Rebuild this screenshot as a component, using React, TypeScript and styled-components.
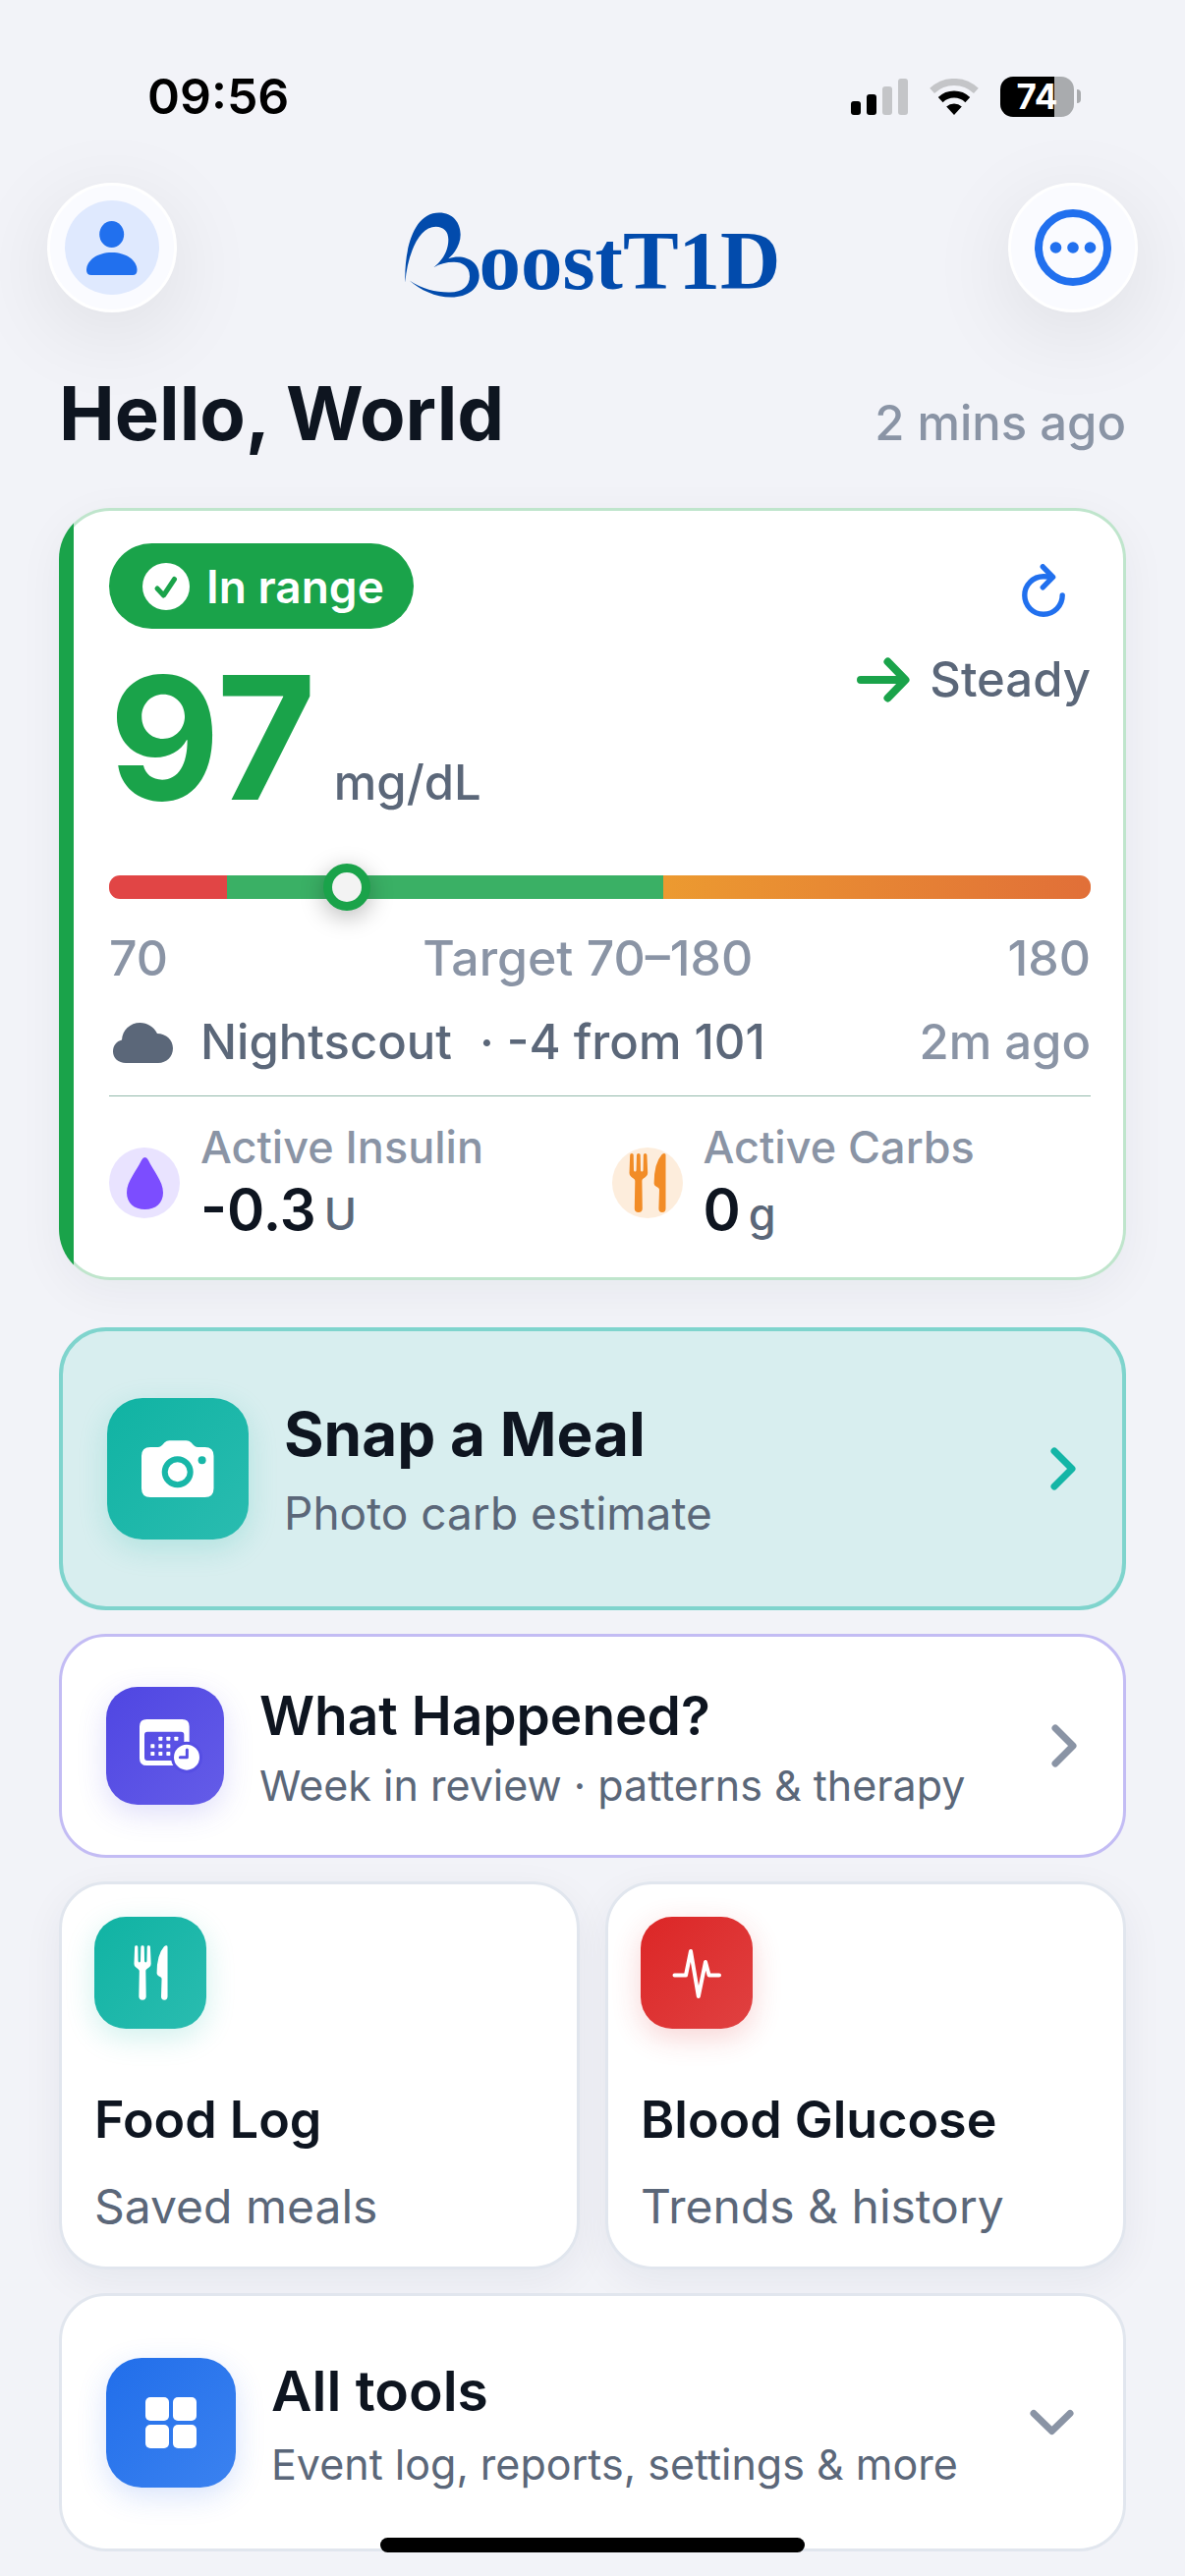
import React from "react";
import styled, { createGlobalStyle } from "styled-components";

const GlobalStyle = createGlobalStyle`
  *, *::before, *::after { box-sizing: border-box; }
  body {
    margin: 0;
    background: #f2f3f8;
    color: #0e1520;
    font-family: Inter, "Noto Sans", sans-serif;
    -webkit-font-smoothing: antialiased;
  }
  button { font: inherit; color: inherit; border: 0; padding: 0; background: none; text-align: left; cursor: pointer; }
  svg { display: block; flex: none; }
`;

const Screen = styled.div`
  padding-bottom: 24px;
`;

const StatusBar = styled.div`
  display: flex;
  align-items: center;
  justify-content: space-between;
  height: 98px;
  margin-top: 49px;
  padding: 0 106px 0 150px;
`;

const Clock = styled.time`
  font-size: 50px;
  font-weight: 600;
  line-height: 60px;
  color: #000;
`;

const StatusIcons = styled.div`
  display: flex;
  align-items: center;
  gap: 22px;
`;

const Battery = styled.div`
  display: flex;
  align-items: center;
  gap: 3px;
`;

const BatteryBody = styled.div`
  display: flex;
  align-items: center;
  justify-content: center;
  width: 75px;
  height: 41px;
  border-radius: 13px;
  background: linear-gradient(to right, #000 74%, #a9abae 74%);
  color: #fff;
  font-size: 35px;
  font-weight: 700;
  line-height: 41px;
`;

const BatteryTip = styled.div`
  width: 4px;
  height: 14px;
  border-radius: 0 4px 4px 0;
  background: #a9abae;
`;

const Header = styled.header`
  display: flex;
  align-items: center;
  justify-content: space-between;
  margin-top: 39px;
  padding: 0 48px;
`;

const RoundButton = styled.button`
  display: grid;
  place-items: center;
  width: 132px;
  height: 132px;
  border: 3px solid #fff;
  border-radius: 50%;
  background: #fafbff;
  box-shadow: 0 20px 90px rgba(0, 0, 0, 0.09);
`;

const Logo = styled.div`
  display: flex;
  align-items: flex-end;
  padding-top: 15px;
  color: #024bac;
  font-family: "Liberation Serif", serif;
  font-size: 85px;
  font-weight: 700;
  line-height: 76px;
`;

const Main = styled.main`
  display: flex;
  flex-direction: column;
  gap: 24px;
  padding: 0 60px;
`;

const Greeting = styled.div`
  display: flex;
  align-items: baseline;
  justify-content: space-between;
  margin: 48px 60px 43px;
`;

const Title = styled.h1`
  margin: 0;
  font-size: 76px;
  font-weight: 700;
  line-height: 108px;
`;

const Meta = styled.span<{ $tone?: "soft" | "strong" }>`
  font-size: 49px;
  font-weight: 500;
  line-height: 60px;
  color: ${(p) => (p.$tone === "strong" ? "#5b6779" : "#8a94a5")};
`;

const RangeLabel = styled(Meta)`
  font-size: 50px;
`;

const GlucoseCard = styled.section`
  display: flex;
  flex-direction: column;
  margin-bottom: 24px;
  padding: 33px 33px 33px 48px;
  border: 3px solid transparent;
  border-radius: 52px;
  background:
    linear-gradient(to right, #1aa34a 12px, #fff 12px) padding-box,
    linear-gradient(to right, #1aa34a 15px, #bfe5cc 15px) border-box;
  box-shadow: 0 12px 48px rgba(20, 30, 60, 0.05);
`;

const Row = styled.div<{ $gapTop?: number; $align?: string }>`
  display: flex;
  align-items: ${(p) => p.$align ?? "center"};
  justify-content: space-between;
  margin-top: ${(p) => p.$gapTop ?? 0}px;
`;

const StatusPill = styled.div`
  display: flex;
  align-items: center;
  gap: 17px;
  height: 87px;
  padding: 0 30px 0 34px;
  border-radius: 44px;
  background: #1aa34a;
  color: #fff;
  font-size: 46px;
  font-weight: 600;
`;

const RefreshButton = styled.button`
  display: grid;
  place-items: center;
  width: 96px;
  height: 87px;
  padding-top: 8px;
`;

const Reading = styled.div`
  display: flex;
  align-items: baseline;
  gap: 18px;
`;

const ReadingValue = styled.span`
  font-size: 174px;
  font-weight: 700;
  line-height: 178px;
  color: #1aa34a;
`;

const Trend = styled.div`
  display: flex;
  align-items: center;
  gap: 20px;
`;

const Range = styled.div`
  position: relative;
  height: 24px;
  margin-top: 51px;
  border-radius: 11px;
  background: linear-gradient(
    to right,
    #e14545 12%,
    #3ab065 12%,
    #3ab065 56.5%,
    #ec9a30 56.5%,
    #e16f38 100%
  );
`;

const RangeKnob = styled.span`
  position: absolute;
  top: 50%;
  width: 48px;
  height: 48px;
  border: 9px solid #1aa34a;
  border-radius: 50%;
  background: #f3f3f3;
  box-shadow: 0 6px 24px rgba(0, 0, 0, 0.28);
  transform: translate(-50%, -50%);
`;

const Source = styled.div`
  display: flex;
  align-items: center;
  gap: 28px;
  padding-left: 4px;
`;

const Divider = styled.hr`
  width: 100%;
  height: 1px;
  margin: 24px 0 0;
  border: 0;
  background: #93b9ac;
`;

const Stats = styled.div`
  display: grid;
  grid-template-columns: 1fr 1fr;
  gap: 24px;
  margin-top: 25px;
`;

const Stat = styled.div`
  display: flex;
  align-items: center;
  gap: 21px;
`;

const StatIcon = styled.div<{ $bg: string }>`
  display: grid;
  place-items: center;
  width: 72px;
  height: 72px;
  border-radius: 50%;
  background: ${(p) => p.$bg};
`;

const StatLabel = styled.div`
  font-size: 45px;
  font-weight: 500;
  line-height: 54px;
  color: #8a94a5;
`;

const StatValue = styled.div`
  display: flex;
  align-items: baseline;
  gap: 8px;
  font-size: 58px;
  font-weight: 600;
  line-height: 72px;
`;

const StatUnit = styled.span`
  font-size: 45px;
  font-weight: 500;
  line-height: 54px;
  color: #5b6779;
`;

const ActionCard = styled.button<{ $height: number; $border: string; $bg?: string; $stroke?: number }>`
  display: flex;
  align-items: center;
  gap: 36px;
  width: 100%;
  min-height: ${(p) => p.$height}px;
  padding: 0 45px;
  border: ${(p) => p.$stroke ?? 3}px solid ${(p) => p.$border};
  border-radius: 48px;
  background: ${(p) => p.$bg ?? "#fff"};
`;

const Tile = styled.span<{ $size: number; $from: string; $to: string; $glow: string }>`
  display: grid;
  flex: none;
  place-items: center;
  width: ${(p) => p.$size}px;
  height: ${(p) => p.$size}px;
  border-radius: ${(p) => (p.$size > 130 ? 36 : 32)}px;
  background: linear-gradient(135deg, ${(p) => p.$from}, ${(p) => p.$to});
  box-shadow: 0 9px 30px ${(p) => p.$glow};
`;

const Copy = styled.span`
  display: flex;
  flex: 1;
  flex-direction: column;
`;

const CardTitle = styled.span<{ $size: number; $weight?: number; $line: number }>`
  font-size: ${(p) => p.$size}px;
  font-weight: ${(p) => p.$weight ?? 600};
  line-height: ${(p) => p.$line}px;
`;

const CardText = styled.span<{ $size: number; $line: number }>`
  font-size: ${(p) => p.$size}px;
  line-height: ${(p) => p.$line}px;
  color: #5b6779;
`;

const Grid = styled.div`
  display: grid;
  grid-template-columns: 1fr 1fr;
  gap: 26px;
`;

const ToolCard = styled.button`
  display: flex;
  flex-direction: column;
  align-items: flex-start;
  padding: 33px 33px 28px;
  border: 3px solid #e1e6ee;
  border-radius: 48px;
  background: #fff;
  box-shadow: 0 12px 42px rgba(20, 30, 60, 0.06);
`;

const ToolCopy = styled.span`
  display: flex;
  flex-direction: column;
  gap: 22px;
  padding-top: 60px;
`;

const HomeIndicator = styled.div`
  position: fixed;
  bottom: 24px;
  left: 50%;
  width: 432px;
  height: 15px;
  border-radius: 8px;
  background: #000;
  transform: translateX(-50%);
`;

const SignalIcon = () => (
  <svg width="58" height="37" viewBox="0 0 58 37" aria-hidden="true">
    <rect x="0" y="23" width="10" height="14" rx="3" />
    <rect x="16" y="16" width="10" height="21" rx="3" />
    <rect x="32" y="8" width="10" height="29" rx="3" fill="#c4c5c8" />
    <rect x="48" y="0" width="10" height="37" rx="3" fill="#c4c5c8" />
  </svg>
);

const WifiIcon = () => (
  <svg width="50" height="37" viewBox="0 0 50 37" fill="none" aria-hidden="true">
    <path d="M2.6 12.4A32.5 32.5 0 0 1 47.4 12.4" stroke="#c4c5c8" strokeWidth="7" />
    <path d="M11.2 21.6A20 20 0 0 1 38.8 21.6" stroke="#000" strokeWidth="7" />
    <path d="M17.2 28.4A12 12 0 0 1 32.8 28.4L25 37Z" fill="#000" />
  </svg>
);

const PersonIcon = () => (
  <svg width="96" height="96" viewBox="0 0 96 96" aria-hidden="true">
    <circle cx="48" cy="48" r="48" fill="#dfe9fe" />
    <g fill="#2170ee">
      <ellipse cx="47.7" cy="34.5" rx="12.5" ry="13.5" />
      <path d="M22 71C22 61 33 53 47.7 53C62.5 53 73.5 61 73.5 71Q73.5 76 69 76H27Q22 76 22 71Z" />
    </g>
  </svg>
);

const MoreIcon = () => (
  <svg width="78" height="78" viewBox="0 0 78 78" fill="#2170ee" aria-hidden="true">
    <circle cx="39" cy="39" r="35" fill="none" stroke="#2170ee" strokeWidth="8" />
    <circle cx="21.5" cy="39" r="5.8" />
    <circle cx="39" cy="39" r="5.8" />
    <circle cx="56.5" cy="39" r="5.8" />
  </svg>
);

const HeartMark = () => (
  <svg width="76" height="87" viewBox="30 47 228 260" fill="#024bac" aria-hidden="true">
    <path d="M31 261C28 170 52 48 135 48C176 48 200 78 200 115C200 144 184 170 163 188C214 172 257 198 257 240C257 280 222 306 172 306C122 306 78 284 44 255C84 282 128 292 168 291C206 290 228 272 228 242C228 212 206 199 180 199C156 199 136 205 118 215C146 193 163 164 163 130C163 106 148 91 125 91C72 91 38 176 31 261Z" />
  </svg>
);

const CheckIcon = () => (
  <svg width="48" height="48" viewBox="0 0 48 48" fill="none" aria-hidden="true">
    <circle cx="24" cy="24" r="24" fill="#fff" />
    <path d="M15 26L21.5 33L32.5 16.5" stroke="#1aa34a" strokeWidth="5" strokeLinecap="round" strokeLinejoin="round" />
  </svg>
);

const RefreshIcon = () => (
  <svg width="44" height="54" viewBox="0 0 44 54" fill="none" stroke="#2170ee" strokeWidth="5.4" strokeLinecap="round" strokeLinejoin="round" aria-hidden="true">
    <path d="M41.2 32A19.2 19.2 0 1 1 22 12.8Q27 12.8 31 13.7" />
    <path d="M21.3 2.8L31.6 13.4L21.3 23.8" />
  </svg>
);

const SteadyArrow = () => (
  <svg width="54" height="46" viewBox="0 0 54 46" fill="none" stroke="#1aa34a" strokeWidth="8" strokeLinecap="round" strokeLinejoin="round" aria-hidden="true">
    <path d="M4 23H48M31.500 4.500L49.500 23L31.500 41.500" />
  </svg>
);

const CloudIcon = () => (
  <svg width="61" height="41" viewBox="0 0 61 41" fill="#5b6779" aria-hidden="true">
    <path d="M13 41C5.500 41 0 36 0 29.500C0 23 3.500 19 9 17.500C9.500 7.500 17.500 0 27.500 0C35 0 41.500 4 45 11C54 11 61 17.500 61 26C61 34.500 54.500 41 46 41Z" />
  </svg>
);

const DropIcon = () => (
  <svg width="37" height="53" viewBox="0 0 37 53" fill="#7c4dff" aria-hidden="true">
    <path d="M18.500 0Q20.500 0 22 3C27 14 37 24 37 36C37 46.500 29.500 53 18.500 53C7.500 53 0 46.500 0 36C0 24 10 14 15 3Q16.500 0 18.500 0Z" />
  </svg>
);

const CutleryIcon = ({ height, color }: { height: number; color: string }) => (
  <svg width={Math.round(height * 0.63)} height={height} viewBox="0 0 38 60" fill={color} aria-hidden="true">
    <path d="M.5 20L1.200 1.500Q1.300 0 3 0Q4.600 0 4.700 1.500L5 17Q5.100 18.500 6.300 18.500Q7.500 18.500 7.600 17L8 1.500Q8.100 0 9.800 0Q11.600 0 11.700 1.500L12 17Q12.100 18.500 13.300 18.500Q14.500 18.500 14.600 17L14.900 1.500Q15 0 16.600 0Q18.300 0 18.400 1.500L19.200 20Q19.300 22.500 17 24L14.500 25.800Q13.300 26.600 13.400 28L13.800 56Q13.800 60 9.800 60Q5.800 60 5.800 56L6.300 28Q6.300 26.600 5 25.800L2.600 24Q.4 22.500 .5 20Z" />
    <path d="M37.500 1.500V56Q37.500 60 34 60Q30.300 60 30.400 56L31 37Q31 35.800 30 35L27.500 33.500Q25.600 32.500 25.600 30.500Q25.600 10 33.500 1.200Q35 0 36 0Q37.500 0 37.500 1.500Z" />
  </svg>
);

const CameraIcon = () => (
  <svg width="144" height="144" viewBox="0 0 144 144" fill="#fff" aria-hidden="true">
    <path d="M44 50H52Q54 50 56 48L58.500 45.300Q60.500 43.300 63.500 43.300H80.500Q83.500 43.300 85.500 45.300L88 48Q90 50 92 50H99.500Q108.500 50 108.500 59V92Q108.500 101 99.500 101H44Q35 101 35 92V59Q35 50 44 50Z" />
    <circle cx="71.700" cy="75.300" r="13" stroke="#18b7a8" strokeWidth="6" />
    <circle cx="96.600" cy="63.300" r="4" fill="#18b7a8" />
  </svg>
);

const CalendarClockIcon = () => (
  <svg width="120" height="120" viewBox="24 291 360 360" fill="#fff" aria-hidden="true">
    <path fillRule="evenodd" d="M148 390H256Q278 390 278 412V509Q278 531 256 531H148Q126 531 126 509V412Q126 390 148 390ZM150 428Q141 428 141 437V507Q141 516 150 516H253Q262 516 262 507V437Q262 428 253 428Z" />
    {[
      [184, 443], [208, 443], [232, 443],
      [160, 466], [184, 466], [208, 466],
      [160, 489], [184, 489], [208, 489],
    ].map(([x, y]) => (
      <rect key={`${x}-${y}`} x={x} y={y} width="12" height="12" rx="2" />
    ))}
    <circle cx="270" cy="506" r="48" fill="#564ee4" />
    <circle cx="270" cy="506" r="39" />
    <path d="M271 483V506H250" fill="none" stroke="#564ee4" strokeWidth="9" strokeLinecap="round" strokeLinejoin="round" />
  </svg>
);

const PulseIcon = () => (
  <svg width="114" height="114" viewBox="0 0 114 114" fill="none" stroke="#fff" strokeWidth="4" strokeLinecap="round" strokeLinejoin="round" aria-hidden="true">
    <path d="M34.500 59.500H46L51 35L58.800 81L66 46L69.600 59.500H80" />
  </svg>
);

const SquaresIcon = () => (
  <svg width="52" height="52" viewBox="0 0 52 52" fill="#fff" aria-hidden="true">
    <rect width="24" height="24" rx="5" />
    <rect x="28" width="24" height="24" rx="5" />
    <rect y="28" width="24" height="24" rx="5" />
    <rect x="28" y="28" width="24" height="24" rx="5" />
  </svg>
);

const ChevronRight = ({ color }: { color: string }) => (
  <svg width="28" height="44" viewBox="0 0 28 44" fill="none" stroke={color} strokeWidth="7" strokeLinecap="round" strokeLinejoin="round" aria-hidden="true">
    <path d="M4 4L22 22L4 40" />
  </svg>
);

const ChevronDown = () => (
  <svg width="50" height="28" viewBox="0 0 50 28" fill="none" stroke="#8a94a5" strokeWidth="7" strokeLinecap="round" strokeLinejoin="round" aria-hidden="true">
    <path d="M4 4.500L22.500 22.500L41 4.500" />
  </svg>
);

const TEAL = { $from: "#10b3a3", $to: "#2abcb0", $glow: "rgba(20, 184, 166, 0.2)" };
const INDIGO = { $from: "#4f46e2", $to: "#645ce8", $glow: "rgba(79, 70, 229, 0.18)" };
const RED = { $from: "#dc2626", $to: "#e04141", $glow: "rgba(220, 38, 38, 0.2)" };
const BLUE = { $from: "#216eea", $to: "#3b82f0", $glow: "rgba(37, 99, 235, 0.18)" };

const LOW = 70;
const HIGH = 180;
const SCALE_MIN = 40;
const SCALE_MAX = 275;

export default function App() {
  const glucose = 97;
  const knob = ((glucose - SCALE_MIN) / (SCALE_MAX - SCALE_MIN)) * 100;

  return (
    <Screen>
      <GlobalStyle />
      <StatusBar>
        <Clock>09:56</Clock>
        <StatusIcons>
          <SignalIcon />
          <WifiIcon />
          <Battery>
            <BatteryBody>74</BatteryBody>
            <BatteryTip />
          </Battery>
        </StatusIcons>
      </StatusBar>

      <Header>
        <RoundButton aria-label="Profile">
          <PersonIcon />
        </RoundButton>
        <Logo>
          <HeartMark />
          oostT1D
        </Logo>
        <RoundButton aria-label="More options">
          <MoreIcon />
        </RoundButton>
      </Header>

      <Greeting>
        <Title>Hello, World</Title>
        <Meta>2 mins ago</Meta>
      </Greeting>

      <Main>
        <GlucoseCard>
          <Row>
            <StatusPill>
              <CheckIcon />
              In range
            </StatusPill>
            <RefreshButton aria-label="Refresh">
              <RefreshIcon />
            </RefreshButton>
          </Row>
          <Row $gapTop={22} $align="flex-start">
            <Reading>
              <ReadingValue>{glucose}</ReadingValue>
              <Meta $tone="strong">mg/dL</Meta>
            </Reading>
            <Trend>
              <SteadyArrow />
              <Meta $tone="strong">Steady</Meta>
            </Trend>
          </Row>
          <Range>
            <RangeKnob style={{ left: `${knob}%` }} />
          </Range>
          <Row $gapTop={30}>
            <RangeLabel>{LOW}</RangeLabel>
            <RangeLabel>
              Target {LOW}–{HIGH}
            </RangeLabel>
            <RangeLabel>{HIGH}</RangeLabel>
          </Row>
          <Row $gapTop={26}>
            <Source>
              <CloudIcon />
              <Meta $tone="strong">Nightscout</Meta>
              <Meta $tone="strong">· -4 from 101</Meta>
            </Source>
            <Meta>2m ago</Meta>
          </Row>
          <Divider />
          <Stats>
            <Stat>
              <StatIcon $bg="#e9e3ff">
                <DropIcon />
              </StatIcon>
              <div>
                <StatLabel>Active Insulin</StatLabel>
                <StatValue>
                  -0.3<StatUnit>U</StatUnit>
                </StatValue>
              </div>
            </Stat>
            <Stat>
              <StatIcon $bg="#fdeddc">
                <CutleryIcon height={60} color="#f28c26" />
              </StatIcon>
              <div>
                <StatLabel>Active Carbs</StatLabel>
                <StatValue>
                  0<StatUnit>g</StatUnit>
                </StatValue>
              </div>
            </Stat>
          </Stats>
        </GlucoseCard>

        <ActionCard $height={288} $border="#7fd4cd" $bg="#d8eeef" $stroke={4}>
          <Tile $size={144} {...TEAL}>
            <CameraIcon />
          </Tile>
          <Copy>
            <CardTitle $size={62} $weight={700} $line={90}>Snap a Meal</CardTitle>
            <CardText $size={46} $line={70}>Photo carb estimate</CardText>
          </Copy>
          <ChevronRight color="#14b5a6" />
        </ActionCard>

        <ActionCard $height={228} $border="#c3bcf4">
          <Tile $size={120} {...INDIGO}>
            <CalendarClockIcon />
          </Tile>
          <Copy>
            <CardTitle $size={55} $line={80}>What Happened?</CardTitle>
            <CardText $size={43} $line={62}>Week in review · patterns &amp; therapy</CardText>
          </Copy>
          <ChevronRight color="#8a94a5" />
        </ActionCard>

        <Grid>
          <ToolCard>
            <Tile $size={114} {...TEAL}>
              <CutleryIcon height={56} color="#fff" />
            </Tile>
            <ToolCopy>
              <CardTitle $size={52} $line={66}>Food Log</CardTitle>
              <CardText $size={48} $line={66}>Saved meals</CardText>
            </ToolCopy>
          </ToolCard>
          <ToolCard>
            <Tile $size={114} {...RED}>
              <PulseIcon />
            </Tile>
            <ToolCopy>
              <CardTitle $size={52} $line={66}>Blood Glucose</CardTitle>
              <CardText $size={48} $line={66}>Trends &amp; history</CardText>
            </ToolCopy>
          </ToolCard>
        </Grid>

        <ActionCard $height={263} $border="#e1e6ee">
          <Tile $size={132} {...BLUE}>
            <SquaresIcon />
          </Tile>
          <Copy>
            <CardTitle $size={57} $line={84}>All tools</CardTitle>
            <CardText $size={43} $line={64}>Event log, reports, settings &amp; more</CardText>
          </Copy>
          <ChevronDown />
        </ActionCard>
      </Main>
      <HomeIndicator />
    </Screen>
  );
}
